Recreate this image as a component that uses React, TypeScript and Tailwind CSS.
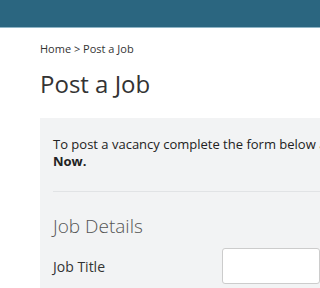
export default function App() {
  return (
    <div className="w-full h-[288px] overflow-hidden bg-white text-[#333]" style={{ fontFamily: '"Open Sans", "Noto Sans", sans-serif' }}>
      <div className="h-[28px] bg-[#2b6680] border-b border-[#8fb5c6]" />
      <div className="pl-[40px]">
        <div className="pt-[13px] text-[11px] leading-[16px] text-[#333] whitespace-nowrap">Home &gt; Post a Job</div>
        <h1 className="mt-[12px] text-[24px] leading-[30px] font-normal text-[#333] whitespace-nowrap">Post a Job</h1>
        <div className="mt-[19px] bg-[#f2f3f4] pl-[13px] pt-[18px] pb-[10px]">
          <p className="text-[13px] leading-[17px] text-[#222] whitespace-nowrap">
            To post a vacancy complete the form below and click Submit
            <br />
            <span className="font-bold">Now.</span>
          </p>
          <div className="mt-[21px] border-t border-[#e1e3e5]" />
          <h2 className="mt-[22px] text-[19px] leading-[24px] font-light text-[#555] whitespace-nowrap">Job Details</h2>
          <div className="mt-[10px] flex items-center">
            <label className="w-[169px] shrink-0 text-[14px] text-[#333]">Job Title</label>
            <input className="h-[36px] min-w-0 flex-1 rounded-[3px] border border-[#ccc] bg-white" />
          </div>
        </div>
      </div>
    </div>
  );
}
